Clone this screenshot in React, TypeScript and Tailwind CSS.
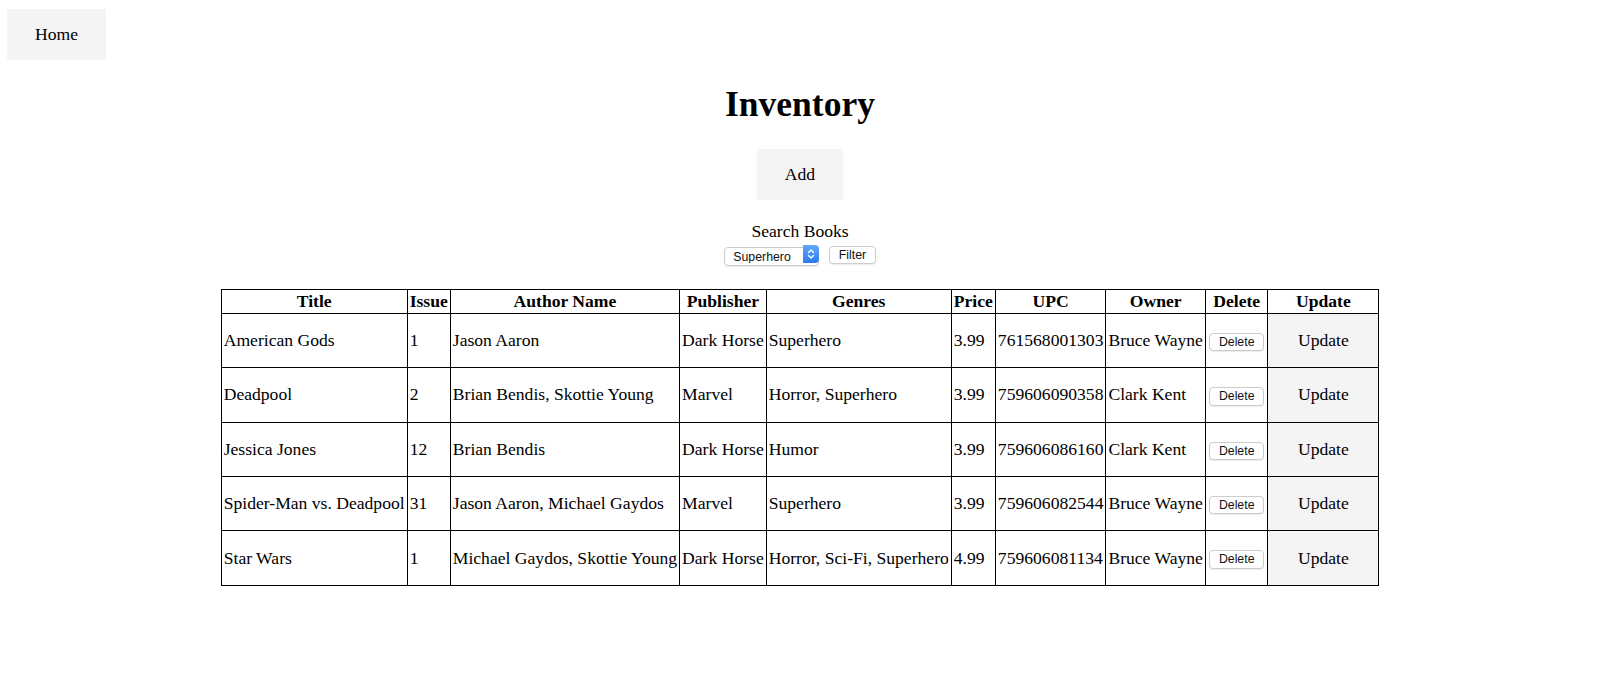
import React from 'react';

interface Book {
  title: string;
  issue: number;
  authors: string;
  publisher: string;
  genres: string;
  price: string;
  upc: string;
  owner: string;
}

const books: Book[] = [
  { title: 'American Gods', issue: 1, authors: 'Jason Aaron', publisher: 'Dark Horse', genres: 'Superhero', price: '3.99', upc: '761568001303', owner: 'Bruce Wayne' },
  { title: 'Deadpool', issue: 2, authors: 'Brian Bendis, Skottie Young', publisher: 'Marvel', genres: 'Horror, Superhero', price: '3.99', upc: '759606090358', owner: 'Clark Kent' },
  { title: 'Jessica Jones', issue: 12, authors: 'Brian Bendis', publisher: 'Dark Horse', genres: 'Humor', price: '3.99', upc: '759606086160', owner: 'Clark Kent' },
  { title: 'Spider-Man vs. Deadpool', issue: 31, authors: 'Jason Aaron, Michael Gaydos', publisher: 'Marvel', genres: 'Superhero', price: '3.99', upc: '759606082544', owner: 'Bruce Wayne' },
  { title: 'Star Wars', issue: 1, authors: 'Michael Gaydos, Skottie Young', publisher: 'Dark Horse', genres: 'Horror, Sci-Fi, Superhero', price: '4.99', upc: '759606081134', owner: 'Bruce Wayne' }
];

const headers = ['Title', 'Issue', 'Author Name', 'Publisher', 'Genres', 'Price', 'UPC', 'Owner', 'Delete', 'Update'];

// native-looking small mac control
const smallBtn =
  "h-[18.5px] px-[8.5px] bg-white border border-[#cccccc] rounded-[4px] shadow-[0_1px_1px_rgba(0,0,0,0.08)] font-['Liberation_Sans',Arial,sans-serif] text-[12.3px] leading-none text-[#111]";

const cell = 'border border-black px-[2px] py-px whitespace-nowrap';

const App: React.FC = () => {
  return (
    <div className="min-h-screen bg-white text-black font-['Liberation_Serif','Times_New_Roman',serif] text-[17.6px] leading-[normal]">
      <div className="pt-[9px] pl-[7px]">
        <button className="h-[51px] px-[28px] bg-[#f4f4f4]">Home</button>
      </div>

      <div className="flex flex-col items-center">
        <h1 className="mt-[23.5px] text-[35.5px] font-bold leading-[41px]">Inventory</h1>

        <button className="mt-[24.5px] h-[51px] px-[28px] bg-[#f4f4f4]">Add</button>

        <div className="mt-[21px] leading-[21px]">Search Books</div>

        <div className="mt-[2.5px] flex items-center gap-[10px]">
          <div className="relative">
            <select
              defaultValue="Superhero"
              className={`${smallBtn} w-[95px] pl-[8px] pr-[18px] appearance-none outline-none`}
            >
              <option>Superhero</option>
              <option>Horror</option>
              <option>Humor</option>
              <option>Sci-Fi</option>
            </select>
            <span className="pointer-events-none absolute right-0 top-0 h-[18.5px] w-[16px] rounded-r-[4px] bg-linear-to-b from-[#63a8f9] to-[#2a78f1] flex items-center justify-center">
              <svg width="8" height="12" viewBox="0 0 8 12" fill="none" stroke="white" strokeWidth="1.4" strokeLinecap="round" strokeLinejoin="round">
                <path d="M1.5 4.5 L4 2 L6.5 4.5" />
                <path d="M1.5 7.5 L4 10 L6.5 7.5" />
              </svg>
            </span>
          </div>
          <button className={smallBtn}>Filter</button>
        </div>

        <table className="mt-[23px] border-collapse border border-black">
          <thead>
            <tr>
              {headers.map(h => (
                <th key={h} className="border border-black px-[2px] py-px font-bold text-center leading-[21px] whitespace-nowrap">
                  {h}
                </th>
              ))}
            </tr>
          </thead>
          <tbody>
            {books.map(book => (
              <tr key={book.upc}>
                <td className={cell}>{book.title}</td>
                <td className={cell}>{book.issue}</td>
                <td className={cell}>{book.authors}</td>
                <td className={cell}>{book.publisher}</td>
                <td className={cell}>{book.genres}</td>
                <td className={cell}>{book.price}</td>
                <td className={cell}>{book.upc}</td>
                <td className={cell}>{book.owner}</td>
                <td className="border border-black px-[2px] py-px text-center">
                  <button className={`${smallBtn} mx-[1.5px]`}>Delete</button>
                </td>
                <td className="border border-black p-px bg-[#f4f4f4]">
                  <button className="w-full h-[51.4px] px-[28.5px] bg-[#f4f4f4] whitespace-nowrap">Update</button>
                </td>
              </tr>
            ))}
          </tbody>
        </table>
      </div>
    </div>
  );
};

export default App;
